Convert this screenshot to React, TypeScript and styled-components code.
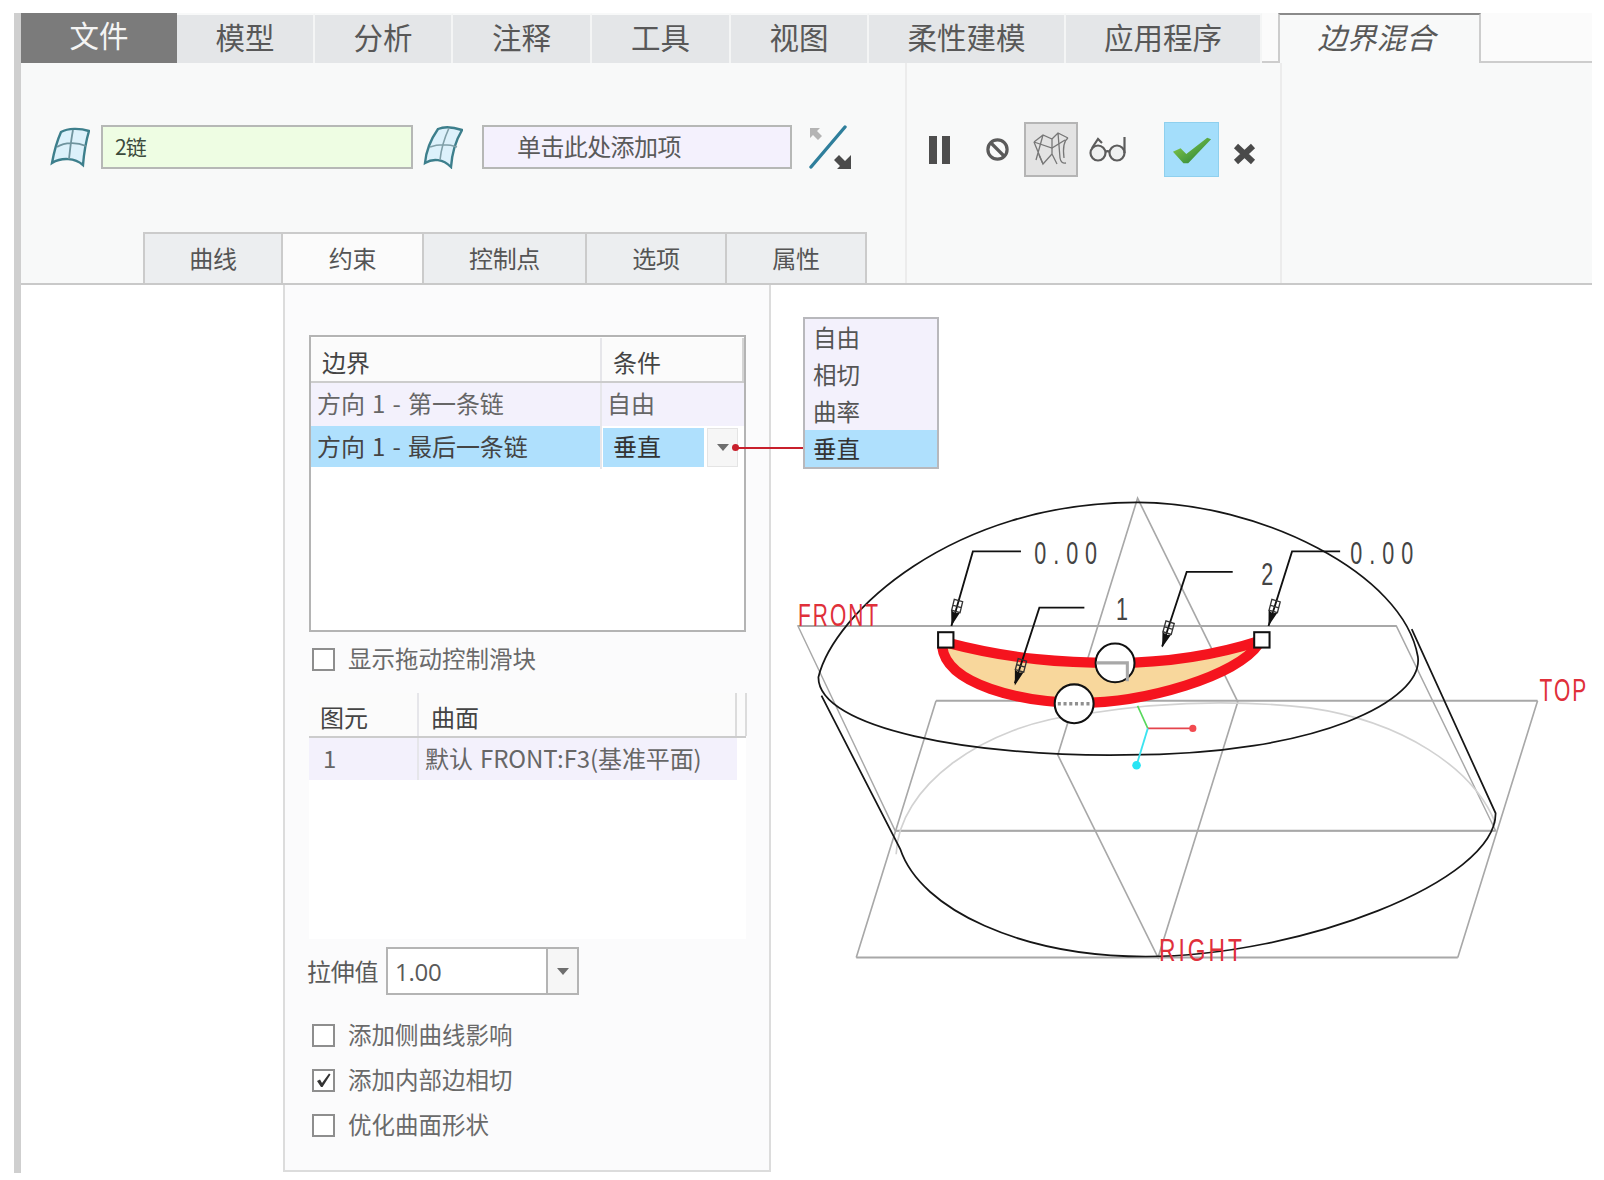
import styled, { createGlobalStyle } from "styled-components";

const GlobalStyle = createGlobalStyle`
  html, body {
    margin: 0;
    padding: 0;
    background: #fff;
  }
  body {
    font-family: "Noto Sans CJK SC", "Liberation Sans", sans-serif;
    color: #555;
  }
`;

const Page = styled.div`
  position: relative;
  width: 1604px;
  height: 1180px;
  padding: 13px 12px 7px 14px;
  box-sizing: border-box;
  overflow: hidden;
  background: #fff;
`;

const Frame = styled.div`
  display: flex;
  flex-direction: column;
  height: 100%;
  border-left: 7px solid #cfcfcf;
`;

const TabBar = styled.div`
  display: flex;
  height: 50px;
  flex: none;
`;

const Tab = styled.div<{ $w: number; $kind?: "file" | "active" }>`
  width: ${(p) => p.$w}px;
  flex: none;
  box-sizing: border-box;
  display: flex;
  align-items: center;
  justify-content: center;
  font-size: 29.5px;
  line-height: 1;
  padding-bottom: ${(p) => (p.$kind === "file" ? 6 : 4)}px;
  padding-right: ${(p) => (p.$kind === "active" ? 6 : 0)}px;
  color: ${(p) => (p.$kind === "file" ? "#f4f4f4" : "#585858")};
  background: ${(p) =>
    p.$kind === "file" ? "#7b7b7b" : p.$kind === "active" ? "#f8f9f9" : "#e4e6e8"};
  border-right: ${(p) => (p.$kind ? "none" : "2px solid #f4f5f5")};
  border-top: ${(p) =>
    p.$kind === "active" ? "2px solid #8a8a8a" : p.$kind ? "none" : "2px solid #f8f9f9"};
  border-left: ${(p) => (p.$kind === "active" ? "2px solid #cdcdcd" : "none")};
  ${(p) => p.$kind === "active" && "border-right: 2px solid #cdcdcd; font-style: italic;"}
`;

const TabGap = styled.div<{ $w?: number }>`
  ${(p) => (p.$w ? `width: ${p.$w}px; flex: none;` : "flex: 1;")}
  border-bottom: 2px solid #cdcdcd;
  background: #fbfbfb;
`;

const Ribbon = styled.div`
  flex: none;
  height: 222px;
  display: flex;
  box-sizing: border-box;
  background: #f8f9f9;
  border-bottom: 2px solid #c9c9c9;
`;

const RibbonMain = styled.div`
  width: 886px;
  flex: none;
  display: flex;
  flex-direction: column;
  justify-content: space-between;
  box-sizing: border-box;
  border-right: 2px solid #ececec;
`;

const RibbonActions = styled.div`
  width: 375px;
  flex: none;
  box-sizing: border-box;
  border-right: 2px solid #ececec;
  display: flex;
  align-items: flex-start;
  padding: 59px 0 0 21px;
`;

const InputRow = styled.div`
  display: flex;
  align-items: center;
  height: 44px;
  margin-top: 62px;
  padding-left: 29px;
`;

const Collector = styled.div<{ $variant: "green" | "violet" }>`
  width: ${(p) => (p.$variant === "green" ? 312 : 310)}px;
  height: 44px;
  box-sizing: border-box;
  display: flex;
  align-items: center;
  border: 2px solid #b6b8b6;
  font-size: ${(p) => (p.$variant === "green" ? 21 : 24)}px;
  letter-spacing: ${(p) => (p.$variant === "green" ? -1 : -0.6)}px;
  color: ${(p) => (p.$variant === "green" ? "#3c4a3c" : "#5a5a5a")};
  background: ${(p) => (p.$variant === "green" ? "#eefde3" : "#f4f1fd")};
  padding-left: ${(p) => (p.$variant === "green" ? 12 : 33)}px;
  padding-bottom: ${(p) => (p.$variant === "green" ? 2 : 4)}px;
`;

const IconSlot = styled.div<{ $w: number; $ml?: number; $mt?: number }>`
  width: ${(p) => p.$w}px;
  margin-left: ${(p) => p.$ml ?? 0}px;
  margin-top: ${(p) => p.$mt ?? 0}px;
  flex: none;
  display: flex;
  align-items: center;
`;

const SubTabs = styled.div`
  display: flex;
  height: 51px;
  margin-left: 122px;
`;

const SubTab = styled.div<{ $w: number; $active?: boolean }>`
  width: ${(p) => p.$w}px;
  flex: none;
  box-sizing: border-box;
  display: flex;
  align-items: center;
  justify-content: center;
  font-size: 24px;
  letter-spacing: -0.3px;
  padding-bottom: 3px;
  color: #555;
  background: ${(p) => (p.$active ? "#fbfbfb" : "#eceef0")};
  border: 2px solid #cbcbcb;
  border-left-width: 0;
  border-bottom: none;
  &:first-child {
    border-left-width: 2px;
  }
`;

const ActionSlot = styled.div<{ $w: number; $ml?: number; $kind?: "mesh" | "ok"; $pt?: number }>`
  width: ${(p) => p.$w}px;
  height: 55px;
  flex: none;
  box-sizing: border-box;
  margin-left: ${(p) => p.$ml ?? 0}px;
  padding-top: ${(p) => p.$pt ?? 0}px;
  display: flex;
  align-items: center;
  justify-content: center;
  ${(p) => p.$kind === "mesh" && "background: #e3e3e3; border: 2px solid #b5b5b5;"}
  ${(p) => p.$kind === "ok" && "background: #a4defb; border: 1px solid #8fd0ee;"}
`;

const Body = styled.div`
  flex: 1;
  display: flex;
  min-height: 0;
  position: relative;
`;

const LeftGap = styled.div`
  width: 262px;
  flex: none;
`;

const Panel = styled.div`
  width: 488px;
  height: 887px;
  flex: none;
  box-sizing: border-box;
  padding: 50px 0 0 24px;
  background: #fbfbfc;
  border: 2px solid #dcdcdc;
  border-top: none;
`;

const BoundaryTable = styled.div`
  width: 437px;
  height: 297px;
  box-sizing: border-box;
  border: 2px solid #b4b4b4;
  background: #fff;
  padding-top: 1px;
`;

const TableRow = styled.div<{ $cols: string; $kind?: "head" | "plain" | "selected"; $h: number; $w?: number }>`
  display: grid;
  grid-template-columns: ${(p) => p.$cols};
  height: ${(p) => p.$h}px;
  width: ${(p) => (p.$w ? `${p.$w}px` : "auto")};
  box-sizing: border-box;
  align-items: stretch;
  font-size: 24px;
  background: ${(p) =>
    p.$kind === "head" ? "#fbfbfb" : p.$kind === "selected" ? "#afe0fd" : "#f3f1fc"};
  color: ${(p) => (p.$kind === "plain" ? "#666" : "#444")};
  ${(p) => p.$kind === "head" && "border-bottom: 2px solid #ccc;"}
`;

const Cell = styled.div<{ $pl: number; $sep?: boolean; $head?: boolean; $end?: boolean }>`
  display: flex;
  align-items: center;
  box-sizing: border-box;
  padding-left: ${(p) => p.$pl}px;
  padding-top: ${(p) => (p.$head ? 3 : 0)}px;
  padding-bottom: ${(p) => (p.$head ? 0 : 4)}px;
  white-space: nowrap;
  word-spacing: 2px;
  letter-spacing: -0.1px;
  ${(p) => p.$sep && "border-right: 2px solid #e6e6ea;"}
  ${(p) => p.$end && "border-right: 2px solid #d4d4d4;"}
`;

const EditCell = styled.div`
  position: relative;
  display: flex;
  align-items: center;
  background: #fff;
  padding: 2px 0 2px 1px;
  box-sizing: border-box;
`;

const EditValue = styled.div`
  width: 101px;
  height: 100%;
  display: flex;
  align-items: center;
  padding-left: 10px;
  padding-bottom: 4px;
  box-sizing: border-box;
  background: #afe0fd;
  color: #333;
  font-size: 24px;
`;

const MiniCombo = styled.div`
  width: 31px;
  height: 39px;
  margin-left: 3px;
  background: #f6f6f6;
  border: 1px solid #e4e4e4;
  box-sizing: border-box;
  display: flex;
  align-items: center;
  justify-content: center;
`;

const Caret = styled.span`
  width: 0;
  height: 0;
  border-left: 6px solid transparent;
  border-right: 6px solid transparent;
  border-top: 7px solid #6e6e6e;
`;

const CheckRow = styled.label<{ $mt?: number }>`
  display: flex;
  align-items: center;
  height: 45px;
  margin-top: ${(p) => p.$mt ?? 0}px;
  padding-left: 3px;
  font-size: 23.5px;
  color: #6a6a6a;
`;

const CheckBox = styled.span`
  width: 23px;
  height: 23px;
  box-sizing: border-box;
  border: 2px solid #8e8e8e;
  background: #fff;
  flex: none;
  margin-right: 13px;
  display: flex;
  align-items: center;
  justify-content: center;
`;

const CheckText = styled.span`
  padding-bottom: 4px;
`;

const EntityTable = styled.div`
  position: relative;
  width: 437px;
  height: 246px;
  margin-top: 11px;
  background: #fff;
`;

const EntityEdge = styled.div`
  position: absolute;
  top: 0;
  left: 426px;
  width: 8px;
  height: 43px;
  border-left: 2px solid #dcdcdc;
  border-right: 2px solid #dcdcdc;
`;

const StretchRow = styled.div`
  display: flex;
  align-items: center;
  height: 48px;
  margin-top: 8px;
  margin-left: -2px;
  font-size: 24px;
  letter-spacing: -0.3px;
  color: #5a5a5a;
`;

const StretchLabel = styled.span`
  padding-bottom: 2px;
`;

const StretchInput = styled.div`
  width: 193px;
  height: 48px;
  margin-left: 8px;
  box-sizing: border-box;
  display: flex;
  border: 2px solid #b4b4b4;
  background: #fff;
`;

const StretchValue = styled.div`
  flex: 1;
  display: flex;
  align-items: center;
  padding-left: 7px;
  font-family: "Open Sans", "Liberation Sans", sans-serif;
  font-size: 24px;
`;

const StretchButton = styled.div`
  width: 29px;
  flex: none;
  display: flex;
  align-items: center;
  justify-content: center;
  background: #f6f6f6;
  border-left: 2px solid #b4b4b4;
`;

const CheckList = styled.div`
  margin-top: 18px;
`;

const Popup = styled.div`
  position: absolute;
  left: 782px;
  top: 32px;
  width: 136px;
  height: 152px;
  box-sizing: border-box;
  border: 2px solid #b8b8bc;
  background: #f3f1fc;
  display: flex;
  flex-direction: column;
  font-size: 23.5px;
  color: #555;
`;

const PopupItem = styled.div<{ $selected?: boolean }>`
  flex: 1;
  display: flex;
  align-items: center;
  padding-left: 8px;
  padding-bottom: 2px;
  ${(p) => p.$selected && "background: #afe0fd; color: #333;"}
`;

const Leader = styled.div`
  position: absolute;
  left: 714px;
  top: 162px;
  width: 68px;
  height: 2px;
  background: #c8202c;
  &::before {
    content: "";
    position: absolute;
    left: -3px;
    top: -3px;
    width: 7px;
    height: 7px;
    border-radius: 50%;
    background: #c8202c;
  }
`;

const DrawingSvg = styled.svg`
  position: absolute;
  left: 749px;
  top: -2px;
  pointer-events: none;
`;

const ModelLabel = styled.text<{ $datum?: boolean }>`
  font-family: "Liberation Sans", sans-serif;
  font-size: 31px;
  fill: ${(p) => (p.$datum ? "#e0303a" : "#444")};
`;

const SurfaceIcon = () => (
  <svg width="40" height="42" viewBox="0 0 40 42">
    <g fill="none" stroke="#3d7f8c" strokeWidth="2.4">
      <path d="M11 6 C18 2 30 2 39 5 C36 15 34 27 33 39 C25 32 12 31 2 37 C4 26 7 15 11 6 Z" fill="#dcf1fb" />
      <path d="M7 21 C15 16 27 16 36 20 M23 4 C21 14 20 24 19 33" strokeWidth="1.8" stroke="#6f949e" />
    </g>
  </svg>
);

const SkewedSurfaceIcon = () => (
  <svg width="40" height="44" viewBox="0 0 40 44">
    <g fill="none" stroke="#3d7f8c" strokeWidth="2.4">
      <path d="M15 4 C22 1 30 2 39 5 C33 15 29 28 28 42 C20 34 10 33 2 38 C3 27 8 14 15 4 Z" fill="#dcf1fb" />
      <path d="M26 3 C21 14 18 25 17 35 M7 22 C15 19 26 19 34 22" strokeWidth="1.6" stroke="#7f9fa8" />
    </g>
  </svg>
);

const FlipIcon = () => (
  <svg width="46" height="46" viewBox="0 0 46 46">
    <path d="M4 42 L38 2" stroke="#2f7f9c" strokeWidth="3.4" strokeLinecap="round" />
    <path d="M3 3 H13 L10 6 L15 11 L11 15 L6 10 L3 13 Z" fill="#b4b4b4" />
    <path d="M44 44 H30 L33 41 L27 35 L32 30 L38 36 L44 30 Z" fill="#4b4b4b" />
  </svg>
);

const PauseIcon = () => (
  <svg width="24" height="28" viewBox="0 0 24 28">
    <rect x="1" y="0" width="8" height="28" fill="#4e4e4e" />
    <rect x="14" y="0" width="8" height="28" fill="#4e4e4e" />
  </svg>
);

const BlockIcon = () => (
  <svg width="25" height="25" viewBox="0 0 25 25" fill="none" stroke="#5a5a5a" strokeWidth="3.2">
    <circle cx="12.5" cy="12.5" r="9.6" />
    <path d="M6 6 L19 19" />
  </svg>
);

const MeshIcon = () => (
  <svg width="40" height="40" viewBox="0 0 40 40" fill="none" stroke="#777" strokeWidth="1.3">
    <path d="M3 12 L12 5 L21 9 L27 3 L37 8 M3 12 L12 34 L21 24 L21 9 M12 5 L5 30 M21 24 L26 34 M27 3 L29 28 Q30 34 35 33 M37 8 Q31 12 33 28" />
    <path d="M3 12 L21 18 L34 10 M12 34 L8 25" />
  </svg>
);

const GlassesIcon = () => (
  <svg width="38" height="27" viewBox="0 0 38 27" fill="none" stroke="#5c5c5c" strokeWidth="2.2">
    <circle cx="9" cy="17" r="7.5" fill="#eef0f0" />
    <circle cx="28" cy="17" r="7.5" fill="#eef0f0" />
    <path d="M16.5 16 Q18.5 14 20.5 16 M3 12 L9 3 L13 7 M35.5 17 L35.5 1" />
  </svg>
);

const OkIcon = () => (
  <svg width="40" height="28" viewBox="0 0 42 34" preserveAspectRatio="none">
    <defs>
      <linearGradient id="okGrad" x1="0" y1="0" x2="1" y2="1">
        <stop offset="0" stopColor="#93d34d" />
        <stop offset="1" stopColor="#1e7a34" />
      </linearGradient>
    </defs>
    <path d="M1 19 L9 15 L15 22 L37 2 L41 4 L17 33 L12 33 Z" fill="url(#okGrad)" />
  </svg>
);

const CloseIcon = () => (
  <svg width="23" height="22" viewBox="0 0 23 22">
    <path d="M3 3 L20 19 M20 3 L3 19" stroke="#4a4a4a" strokeWidth="6" />
  </svg>
);

const Tick = () => (
  <svg width="17" height="17" viewBox="0 0 17 17">
    <path d="M2 9 L5 7.5 L7 11 L14 1.5 L15.5 2.5 L7.5 15 L6 15 Z" fill="#333" />
  </svg>
);

const Arrowhead = ({ x, y, angle }: { x: number; y: number; angle: number }) => (
  <g transform={`translate(${x} ${y}) rotate(${angle})`}>
    <path d="M0 0 L-4.5 -15 L0 -13 L4.5 -15 Z" fill="#111" />
    <path d="M-4 -15 L-4.5 -26 L4 -26 L4.5 -15 Z M-4.5 -20 H4.2" fill="none" stroke="#333" strokeWidth="1.3" />
  </g>
);

// traced from the model view, in the coordinates of the shrunk screenshot
const Drawing = () => (
  <DrawingSvg width="855" height="897" viewBox="0 0 855 897">
    <g transform="translate(-770 -283) scale(1.023)" fill="none">
      <g stroke="#a8a8a8" strokeWidth="1.6">
        <path d="M780 612 H1365 L1462 812 H875 Z" strokeWidth="1.4" />
        <path d="M780 612 H1365 M875 812 H1462 M915 685 H1503 M837 936 H1425" strokeWidth="2" />
        <path d="M915 685 L837 936 M1503 685 L1425 936" />
        <path d="M1112 487 L1210 686 L1132 936 L1034 738 Z" />
      </g>
      <path d="M876 835 C878 770 960 708 1060 698 C1140 685 1210 684 1280 692 C1370 705 1440 750 1462 805" stroke="#d2d2d2" strokeWidth="1.6" />
      <g stroke="#161616" strokeWidth="1.7">
        <path d="M800 662 C815 600 930 491 1112 491 C1230 491 1372 560 1386 642 C1392 684 1290 738 1100 738 C950 740 800 712 800 662 Z" />
        <path d="M803 680 L880 830 C900 890 1000 935 1120 935 C1270 935 1462 862 1462 795 L1380 615" />
      </g>
      <path d="M925 628 C990 645 1040 648 1090 648 C1140 648 1190 640 1233 626 C1210 660 1120 688 1050 688 C1000 688 925 670 925 628 Z" fill="#f8d79c" />
      <path d="M925 628 C990 645 1040 648 1090 648 C1140 648 1190 640 1233 626" stroke="#f5141e" strokeWidth="10" />
      <path d="M921 632 C925 670 1000 686 1050 687 C1120 688 1210 660 1230 630" stroke="#f5141e" strokeWidth="10" />
      <g stroke="#111" strokeWidth="1.8">
        <path d="M998 539 H951 L930 612 M1060 594 H1016 L992 668 M1205 559 H1160 L1136 632 M1310 539 H1263 L1240 612" />
      </g>
      <Arrowhead x={930} y={612} angle={16} />
      <Arrowhead x={992} y={670} angle={17} />
      <Arrowhead x={1136} y={633} angle={18} />
      <Arrowhead x={1240} y={612} angle={17} />
      <g fill="#fff" stroke="#111" strokeWidth="2">
        <rect x="917" y="618" width="15" height="15" />
        <rect x="1226" y="618" width="15" height="15" />
        <circle cx="1090" cy="648" r="19" />
        <circle cx="1050" cy="688" r="19" />
      </g>
      <path d="M1072 648 H1102 V666" stroke="#a8a8a8" strokeWidth="3" />
      <path d="M1034 688 H1067" stroke="#8f8f8f" strokeWidth="3.5" strokeDasharray="3 2.6" />
      <path d="M1112 690 L1122 712" stroke="#58d85c" strokeWidth="1.6" />
      <path d="M1122 712 H1165" stroke="#e4444c" strokeWidth="1.6" />
      <circle cx="1166" cy="712" r="3.5" fill="#f24a50" />
      <path d="M1122 712 L1111 748" stroke="#3ce4f0" strokeWidth="1.8" />
      <circle cx="1111" cy="748" r="4.2" fill="#28e4f4" />
      <g fontWeight="300">
        <ModelLabel $datum transform="translate(780 612) scale(.66 .98)" letterSpacing="3">FRONT</ModelLabel>
        <ModelLabel $datum transform="translate(1505 685) scale(.66 .98)" letterSpacing="3">TOP</ModelLabel>
        <ModelLabel $datum transform="translate(1133 939) scale(.72 .98)" letterSpacing="4">RIGHT</ModelLabel>
        <ModelLabel transform="translate(1011 551) scale(.68 .98)" letterSpacing="10">0.00</ModelLabel>
        <ModelLabel transform="translate(1320 551) scale(.68 .98)" letterSpacing="10">0.00</ModelLabel>
        <ModelLabel transform="translate(1091 606) scale(.68 .98)">1</ModelLabel>
        <ModelLabel transform="translate(1233 572) scale(.68 .98)">2</ModelLabel>
      </g>
    </g>
  </DrawingSvg>
);

const topTabs = [
  { label: "模型", w: 138 },
  { label: "分析", w: 138 },
  { label: "注释", w: 139 },
  { label: "工具", w: 139 },
  { label: "视图", w: 138 },
  { label: "柔性建模", w: 197 },
  { label: "应用程序", w: 196 },
];

const subTabs = [
  { label: "曲线", w: 140 },
  { label: "约束", w: 141, active: true },
  { label: "控制点", w: 163 },
  { label: "选项", w: 140 },
  { label: "属性", w: 140 },
];

const boundaryCols = "291px 142px";
const entityCols = "110px 318px";

const App = () => {
  return (
    <>
      <GlobalStyle />
      <Page>
        <Frame>
          <TabBar>
            <Tab $w={156} $kind="file">文件</Tab>
            {topTabs.map((tab) => (
              <Tab key={tab.label} $w={tab.w}>{tab.label}</Tab>
            ))}
            <TabGap $w={16} />
            <Tab $w={203} $kind="active">边界混合</Tab>
            <TabGap />
          </TabBar>

          <Ribbon>
            <RibbonMain>
              <InputRow>
                <IconSlot $w={51}><SurfaceIcon /></IconSlot>
                <Collector $variant="green">2链</Collector>
                <IconSlot $w={59} $ml={10}><SkewedSurfaceIcon /></IconSlot>
                <Collector $variant="violet">单击此处添加项</Collector>
                <IconSlot $w={46} $ml={15} $mt={2}><FlipIcon /></IconSlot>
              </InputRow>
              <SubTabs>
                {subTabs.map((tab) => (
                  <SubTab key={tab.label} $w={tab.w} $active={tab.active}>{tab.label}</SubTab>
                ))}
              </SubTabs>
            </RibbonMain>
            <RibbonActions>
              <ActionSlot $w={24}><PauseIcon /></ActionSlot>
              <ActionSlot $w={25} $ml={33}><BlockIcon /></ActionSlot>
              <ActionSlot $w={54} $ml={14} $kind="mesh"><MeshIcon /></ActionSlot>
              <ActionSlot $w={38} $ml={11}><GlassesIcon /></ActionSlot>
              <ActionSlot $w={55} $ml={37} $kind="ok"><OkIcon /></ActionSlot>
              <ActionSlot $w={23} $ml={14} $pt={8}><CloseIcon /></ActionSlot>
            </RibbonActions>
          </Ribbon>

          <Body>
            <LeftGap />
            <Panel>
              <BoundaryTable>
                <TableRow $cols={boundaryCols} $kind="head" $h={45}>
                  <Cell $pl={11} $sep $head>边界</Cell>
                  <Cell $pl={11} $head $end>条件</Cell>
                </TableRow>
                <TableRow $cols={boundaryCols} $kind="plain" $h={43}>
                  <Cell $pl={6} $sep>方向 1 - 第一条链</Cell>
                  <Cell $pl={5}>自由</Cell>
                </TableRow>
                <TableRow $cols={boundaryCols} $kind="selected" $h={41}>
                  <Cell $pl={6} $sep>方向 1 - 最后一条链</Cell>
                  <EditCell>
                    <EditValue>垂直</EditValue>
                    <MiniCombo><Caret /></MiniCombo>
                  </EditCell>
                </TableRow>
              </BoundaryTable>

              <CheckRow $mt={5}>
                <CheckBox />
                <CheckText>显示拖动控制滑块</CheckText>
              </CheckRow>

              <EntityTable>
                <TableRow $cols={entityCols} $kind="head" $h={45}>
                  <Cell $pl={11} $sep $head>图元</Cell>
                  <Cell $pl={12} $head>曲面</Cell>
                </TableRow>
                <EntityEdge />
                <TableRow $cols={entityCols} $kind="plain" $h={42} $w={428}>
                  <Cell $pl={14} $sep>1</Cell>
                  <Cell $pl={6}>默认 FRONT:F3(基准平面)</Cell>
                </TableRow>
              </EntityTable>

              <StretchRow>
                <StretchLabel>拉伸值</StretchLabel>
                <StretchInput>
                  <StretchValue>1.00</StretchValue>
                  <StretchButton><Caret /></StretchButton>
                </StretchInput>
              </StretchRow>

              <CheckList>
                <CheckRow>
                  <CheckBox />
                  <CheckText>添加侧曲线影响</CheckText>
                </CheckRow>
                <CheckRow>
                  <CheckBox><Tick /></CheckBox>
                  <CheckText>添加内部边相切</CheckText>
                </CheckRow>
                <CheckRow>
                  <CheckBox />
                  <CheckText>优化曲面形状</CheckText>
                </CheckRow>
              </CheckList>
            </Panel>

            <Drawing />
            <Leader />
            <Popup>
              <PopupItem>自由</PopupItem>
              <PopupItem>相切</PopupItem>
              <PopupItem>曲率</PopupItem>
              <PopupItem $selected>垂直</PopupItem>
            </Popup>
          </Body>
        </Frame>
      </Page>
    </>
  );
};

export default App;
